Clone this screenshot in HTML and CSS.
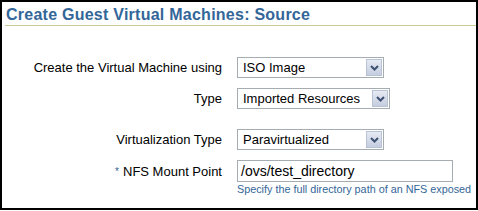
FILE: index.html
```html
<!DOCTYPE html>
<html>
<head>
<meta charset="utf-8">
<link rel="stylesheet" href="styles.css">
</head>
<body>
<div class="panel">
  <h1 class="title">Create Guest Virtual Machines: Source</h1>
  <div class="form">
    <div class="row r1">
      <div class="label">Create the Virtual Machine using</div>
      <div class="field">
        <div class="select w146"><span class="val">ISO Image</span><span class="btn"><svg width="9" height="6" viewBox="0 0 9 6"><polyline points="1,1 4.5,4.5 8,1" fill="none" stroke="#3d4f72" stroke-width="2"/></svg></span></div>
      </div>
    </div>
    <div class="row r2">
      <div class="label">Type</div>
      <div class="field">
        <div class="select w152"><span class="val">Imported Resources</span><span class="btn"><svg width="9" height="6" viewBox="0 0 9 6"><polyline points="1,1 4.5,4.5 8,1" fill="none" stroke="#3d4f72" stroke-width="2"/></svg></span></div>
      </div>
    </div>
    <div class="row r3">
      <div class="label">Virtualization Type</div>
      <div class="field">
        <div class="select w146"><span class="val">Paravirtualized</span><span class="btn"><svg width="9" height="6" viewBox="0 0 9 6"><polyline points="1,1 4.5,4.5 8,1" fill="none" stroke="#3d4f72" stroke-width="2"/></svg></span></div>
      </div>
    </div>
    <div class="row r4">
      <div class="label"><span class="req">*</span>NFS Mount Point</div>
      <div class="field">
        <div class="input">/ovs/test_directory</div>
      </div>
    </div>
    <div class="row help-row">
      <div class="label"></div>
      <div class="help">Specify the full directory path of an NFS exposed</div>
    </div>
  </div>
</div>
</body>
</html>
```
FILE: styles.css
```css
html, body {
  margin: 0;
  padding: 0;
  background: #fff;
}
body {
  font-family: "Liberation Sans", Arial, sans-serif;
  width: 478px;
  height: 211px;
  overflow: hidden;
}
.panel {
  box-sizing: border-box;
  width: 478px;
  height: 210px;
  border: 2px solid #000;
  padding: 0 0 0 3px;
  overflow: hidden;
}
.title {
  margin: 0;
  padding: 4px 0 2px 1px;
  font-size: 16px;
  font-weight: bold;
  letter-spacing: 0.25px;
  color: #336699;
  border-bottom: 1px solid #cccc99;
  line-height: 17px;
  white-space: nowrap;
}
.form {
  padding-top: 31px;
}
.row {
  display: flex;
  align-items: center;
}
.label {
  width: 217px;
  flex: none;
  text-align: right;
  font-size: 13px;
  color: #000;
  padding-right: 15px;
  white-space: nowrap;
}
.r2 { margin-top: 10px; }
.r3 { margin-top: 20px; }
.r4 { margin-top: 10px; }
.select {
  box-sizing: border-box;
  height: 21px;
  border: 1px solid #a5acb2;
  display: flex;
  align-items: center;
  justify-content: space-between;
  padding: 0 1px 0 5px;
  font-size: 13px;
  color: #000;
  background: #fff;
}
.w146 { width: 147px; }
.w152 { width: 153px; }
.btn {
  box-sizing: border-box;
  width: 16px;
  height: 17px;
  border: 1px solid #b9c3d6;
  background: linear-gradient(#e6eaf3, #c4cde0);
  display: flex;
  align-items: center;
  justify-content: center;
}
.input {
  box-sizing: border-box;
  width: 216px;
  height: 22px;
  border: 1px solid #a5acb2;
  padding: 0 3px;
  font-size: 14px;
  line-height: 20px;
  color: #000;
}
.req {
  color: #336699;
  font-size: 10px;
  margin-right: 4px;
  vertical-align: 1px;
}
.help-row {
  align-items: flex-start;
}
.help {
  font-size: 10.8px;
  color: #336699;
  white-space: nowrap;
  line-height: 13px;
  margin-top: 1px;
}
```
